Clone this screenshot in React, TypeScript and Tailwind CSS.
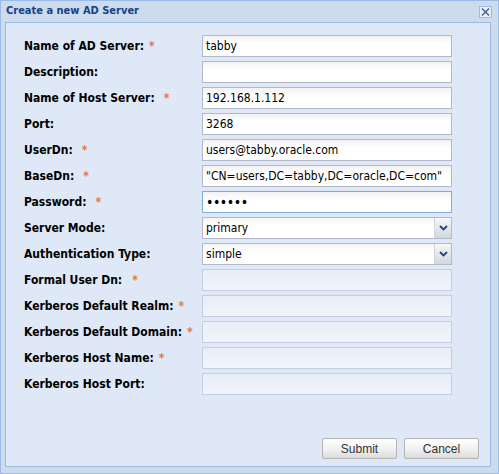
import React from 'react';

type Field = {
  label: string;
  required?: boolean;
  gap?: string;
  value?: string;
  kind?: 'text' | 'password' | 'select' | 'disabled';
  focused?: boolean;
};

const fields: Field[] = [
  { label: 'Name of AD Server:', required: true, gap: 'ml-[5px]', value: 'tabby' },
  { label: 'Description:', value: '' },
  { label: 'Name of Host Server:', required: true, gap: 'ml-[9px]', value: '192.168.1.112' },
  { label: 'Port:', value: '3268' },
  { label: 'UserDn:', required: true, gap: 'ml-[9px]', value: 'users@tabby.oracle.com' },
  { label: 'BaseDn:', required: true, gap: 'ml-[9px]', value: '"CN=users,DC=tabby,DC=oracle,DC=com"' },
  { label: 'Password:', required: true, gap: 'ml-[9px]', value: '••••••', kind: 'password', focused: true },
  { label: 'Server Mode:', value: 'primary', kind: 'select' },
  { label: 'Authentication Type:', value: 'simple', kind: 'select' },
  { label: 'Formal User Dn:', required: true, gap: 'ml-[10px]', kind: 'disabled' },
  { label: 'Kerberos Default Realm:', required: true, gap: 'ml-[5px]', kind: 'disabled' },
  { label: 'Kerberos Default Domain:', required: true, gap: 'ml-[5px]', kind: 'disabled' },
  { label: 'Kerberos Host Name:', required: true, gap: 'ml-[5px]', kind: 'disabled' },
  { label: 'Kerberos Host Port:', kind: 'disabled' },
];

const font = "font-['DejaVu_Sans_Condensed','DejaVu_Sans',sans-serif]";

function Chevron() {
  return (
    <svg width="9" height="6" viewBox="0 0 9 6">
      <path d="M1 1 L4.5 4.5 L8 1" fill="none" stroke="#23437a" strokeWidth="1.8" />
    </svg>
  );
}

function Control({ f }: { f: Field }) {
  if (f.kind === 'disabled') {
    return (
      <div className="h-[22px] w-[250px] border border-[#c3cfe0] bg-gradient-to-b from-[#e8eef7] to-[#f1f5fb]" />
    );
  }
  if (f.kind === 'select') {
    return (
      <div className="flex h-[22px] w-[250px] border border-[#b5b8c8] bg-gradient-to-b from-[#f4f4f4] to-white to-40%">
        <div className="flex flex-1 items-center pl-[3px] text-[12px] text-black">{f.value}</div>
        <div className="flex w-[17px] items-center justify-center border-l border-[#d0d4dc] bg-gradient-to-b from-[#f7f7f7] to-[#d3d6dc]">
          <Chevron />
        </div>
      </div>
    );
  }
  return (
    <div
      className={`flex h-[22px] w-[250px] items-center border pl-[3px] text-[12px] text-black bg-gradient-to-b from-[#f2f2f2] to-white to-40% ${
        f.focused ? 'border-[#7eadd9]' : 'border-[#b5b8c8]'
      } ${f.kind === 'password' ? 'text-[14px] tracking-[-0.5px]' : ''}`}
    >
      {f.value}
    </div>
  );
}

export default function App() {
  return (
    <div className={`flex h-[474px] w-[499px] flex-col border border-[#99bbe8] bg-[#cedbea] ${font}`}>
      <div className="flex h-[21px] items-center justify-between pl-[5px] pr-[6px]">
        <span className="text-[11px] font-bold text-[#15428b]">Create a new AD Server</span>
        <div className="flex h-[12px] w-[13px] items-center justify-center border border-[#99bbe8] bg-[#e6eef8]">
          <svg width="9" height="8" viewBox="0 0 9 8">
            <path d="M1 0.5 L8 7.5 M8 0.5 L1 7.5" stroke="#3e5a86" strokeWidth="1.3" />
          </svg>
        </div>
      </div>
      <div className="mb-[6px] ml-[4px] mr-[7px] flex flex-1 flex-col border border-[#99bbe8] bg-[#dfe8f6]">
        <div className="flex flex-col gap-[4px] pl-[18px] pt-[12px]">
          {fields.map((f) => (
            <div key={f.label} className="flex h-[22px] items-center">
              <div className="flex w-[178px] items-center text-[12px] font-bold text-black">
                <span>{f.label}</span>
                {f.required && <span className={`${f.gap} text-[#e07a3c]`}>*</span>}
              </div>
              <Control f={f} />
            </div>
          ))}
        </div>
        <div className="mt-auto flex justify-end gap-[7px] pb-[7px] pr-[11px]">
          {['Submit', 'Cancel'].map((b) => (
            <button
              key={b}
              className="h-[21px] w-[75px] rounded-[2px] border border-[#b4b4b4] bg-gradient-to-b from-white via-[#f2f2f2] to-[#dcdcdc] font-['Liberation_Sans',sans-serif] text-[12px] text-[#333]"
            >
              {b}
            </button>
          ))}
        </div>
      </div>
    </div>
  );
}
